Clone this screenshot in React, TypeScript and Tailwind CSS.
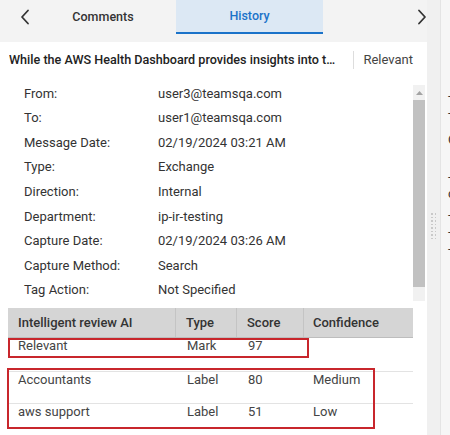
import React from "react";

const details: [string, string][] = [
  ["From:", "user3@teamsqa.com"],
  ["To:", "user1@teamsqa.com"],
  ["Message Date:", "02/19/2024 03:21 AM"],
  ["Type:", "Exchange"],
  ["Direction:", "Internal"],
  ["Department:", "ip-ir-testing"],
  ["Capture Date:", "02/19/2024 03:26 AM"],
  ["Capture Method:", "Search"],
  ["Tag Action:", "Not Specified"],
];

const rows = [
  { name: "Relevant", type: "Mark", score: "97", confidence: "" },
  { name: "Accountants", type: "Label", score: "80", confidence: "Medium" },
  { name: "aws support", type: "Label", score: "51", confidence: "Low" },
];

function Chevron({ dir }: { dir: "left" | "right" }) {
  return (
    <svg width="10" height="16" viewBox="0 0 10 16" fill="none">
      <path
        d={dir === "left" ? "M8 1.5 L2 8 L8 14.5" : "M2 1.5 L8 8 L2 14.5"}
        stroke="#333"
        strokeWidth="1.8"
        strokeLinecap="round"
        strokeLinejoin="round"
      />
    </svg>
  );
}

export default function App() {
  return (
    <div className="relative w-[450px] h-[435px] flex overflow-hidden bg-[#f3f3f3] font-['Roboto',sans-serif] text-[13px] text-[#333]">
      <div className="w-[427px] flex flex-col">
        {/* tab strip */}
        <div className="h-[42px] flex items-start">
          <div className="w-[30px] h-[34px] flex items-center justify-center pl-[19px]">
            <Chevron dir="left" />
          </div>
          <div className="w-[146px] h-[34px] flex items-center justify-center font-medium text-[12.5px] text-[#333]">
            Comments
          </div>
          <div className="w-[147px] h-[34px] flex items-center justify-center font-medium text-[12.5px] text-[#1b73c9] bg-[#dce8f4] border-b-2 border-[#1b73c9]">
            History
          </div>
          <div className="flex-1 h-[34px] flex items-center justify-end">
            <Chevron dir="right" />
          </div>
        </div>

        {/* message card */}
        <div className="flex-1 bg-white flex flex-col min-h-0">
          <div className="h-[36px] flex items-center pl-[9px] pr-[14px] shrink-0">
            <div className="w-[332px] truncate font-medium text-[12.6px] text-[#222]">
              While the AWS Health Dashboard provides insights into the status of your resources
            </div>
            <div className="ml-[14px] w-px h-[18px] bg-[#dddddd]" />
            <div className="ml-[9px] text-[#444]">Relevant</div>
          </div>

          <div className="flex pt-[1px]">
            <div className="flex-1 pl-[24px] pt-[2px]">
              {details.map(([label, value]) => (
                <div key={label} className="h-[24.6px] flex items-center">
                  <div className="w-[134px]">{label}</div>
                  <div>{value}</div>
                </div>
              ))}
            </div>
            {/* scrollbar */}
            <div className="w-[12px] mr-[2px] mt-[6px] flex flex-col bg-[#f1f1f1] h-[216px]">
              <div className="h-[15px] flex items-center justify-center">
                <svg width="7" height="4" viewBox="0 0 7 4">
                  <path d="M0 4 L3.5 0 L7 4 Z" fill="#a3a3a3" />
                </svg>
              </div>
              <div className="h-[187px] bg-[#c1c1c1]" />
            </div>
          </div>

          {/* review table */}
          <div className="mt-[6px] ml-[8px] w-[405px]">
            <div className="h-[30px] flex bg-[#d5d5d5] border-b border-[#bdbdbd] font-medium text-[#333]">
              <div className="w-[168px] pl-[10px] flex items-center border-r border-[#c4c4c4]">Intelligent review AI</div>
              <div className="w-[61px] pl-[10px] flex items-center border-r border-[#c4c4c4]">Type</div>
              <div className="w-[67px] pl-[10px] flex items-center border-r border-[#c4c4c4]">Score</div>
              <div className="flex-1 pl-[9px] flex items-center">Confidence</div>
            </div>
            {rows.map((r, i) => (
              <div
                key={r.name}
                className={`h-[32.5px] flex leading-[15px] text-[#444] ${i === 0 ? "" : "border-t border-[#e3e3e3]"}`}
              >
                <div className="w-[168px] pl-[10px]">{r.name}</div>
                <div className="w-[61px] pl-[11px]">{r.type}</div>
                <div className="w-[67px] pl-[11px]">{r.score}</div>
                <div className="flex-1 pl-[9px]">{r.confidence}</div>
              </div>
            ))}
          </div>
        </div>
      </div>

      {/* neighbouring pane behind the splitter */}
      <div className="flex-1 flex">
        <div className="w-[13px] bg-[#f0f0f0] flex flex-col items-center pt-[213px]">
          <div className="grid grid-cols-2 gap-x-[2px] gap-y-[2px]">
            {Array.from({ length: 16 }).map((_, i) => (
              <div key={i} className="w-[1.5px] h-[1.5px] bg-[#c9c9c9]" />
            ))}
          </div>
        </div>
        <div className="w-px bg-[#e4e4e4]" />
        <div className="flex-1 bg-[#f6f6f6] pl-[7px] pt-[87px] overflow-hidden text-[13px] text-[#333] leading-[17px] whitespace-nowrap">
          <div>-</div>
          <div>-</div>
          <div className="mt-[10px]">C</div>
          <div className="mt-[20px]">-</div>
          <div>c</div>
          <div className="mt-[4px]">-</div>
          <div>-</div>
          <div>-</div>
        </div>
      </div>

      {/* annotation boxes */}
      <div className="absolute left-[8px] top-[338px] w-[301px] h-[20px] border-2 border-[#c8262c]" />
      <div className="absolute left-[7px] top-[368px] w-[368px] h-[61px] border-2 border-[#c8262c]" />
    </div>
  );
}
